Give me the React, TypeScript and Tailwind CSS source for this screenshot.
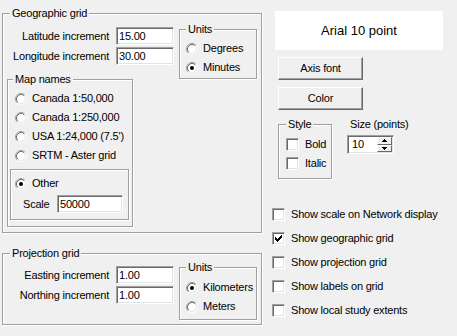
import type { ReactNode } from "react";

function GroupBox({
  title,
  titleClass = "left-[7px]",
  className = "",
  children,
}: {
  title?: string;
  titleClass?: string;
  className?: string;
  children: ReactNode;
}) {
  return (
    <div
      className={`relative border border-[#a0a0a0] shadow-[1px_1px_0_#fff,inset_1px_1px_0_#fff] ${className}`}
    >
      {title && (
        <span
          className={`absolute -top-[7px] bg-[#f0f0f0] px-[2px] leading-[13px] ${titleClass}`}
        >
          {title}
        </span>
      )}
      {children}
    </div>
  );
}

function TextBox({ value, className = "" }: { value: string; className?: string }) {
  return (
    <input
      defaultValue={value}
      className={`h-[18px] border border-t-[#a0a0a0] border-l-[#a0a0a0] border-b-white border-r-white bg-white px-[2px] leading-[13px] shadow-[inset_1px_1px_0_#696969,inset_-1px_-1px_0_#e3e3e3] outline-none ${className}`}
    />
  );
}

function RadioDot({ checked }: { checked?: boolean }) {
  return (
    <svg width="12" height="12" viewBox="0 0 12 12" className="shrink-0">
      <circle cx="6" cy="6" r="4.5" fill="#fff" />
      <path d="M2.11 9.89A5.5 5.5 0 0 1 9.89 2.11" fill="none" stroke="#a0a0a0" />
      <path d="M9.89 2.11A5.5 5.5 0 0 1 2.11 9.89" fill="none" stroke="#fff" />
      <path d="M2.82 9.18A4.5 4.5 0 0 1 9.18 2.82" fill="none" stroke="#696969" />
      <path d="M9.18 2.82A4.5 4.5 0 0 1 2.82 9.18" fill="none" stroke="#e3e3e3" />
      {checked && <circle cx="6" cy="6" r="2" fill="#000" />}
    </svg>
  );
}

function Radio({ label, checked }: { label: string; checked?: boolean }) {
  return (
    <div className="flex h-[19px] items-center gap-[5px]">
      <RadioDot checked={checked} />
      <span className="whitespace-nowrap">{label}</span>
    </div>
  );
}

function CheckBox({ checked }: { checked?: boolean }) {
  return (
    <span className="flex h-[13px] w-[13px] shrink-0 items-center justify-center border border-t-[#a0a0a0] border-l-[#a0a0a0] border-b-white border-r-white bg-white shadow-[inset_1px_1px_0_#696969,inset_-1px_-1px_0_#e3e3e3]">
      {checked && (
        <svg width="7" height="7" viewBox="0 0 7 7" shapeRendering="crispEdges">
          <path
            d="M6 0h1v3h-1zM5 1h1v3h-1zM4 2h1v3h-1zM3 3h1v3h-1zM2 4h1v3h-1zM1 3h1v3h-1zM0 2h1v3h-1z"
            fill="#000"
          />
        </svg>
      )}
    </span>
  );
}

function Check({ label, checked, className = "" }: { label: string; checked?: boolean; className?: string }) {
  return (
    <div className={`flex items-center gap-[6px] ${className}`}>
      <CheckBox checked={checked} />
      <span className="whitespace-nowrap">{label}</span>
    </div>
  );
}

function Button({ label, className = "" }: { label: string; className?: string }) {
  return (
    <button
      type="button"
      className={`flex h-[23px] w-[85px] items-center justify-center border border-t-white border-l-white border-b-[#696969] border-r-[#696969] bg-[#f0f0f0] font-normal text-black shadow-[inset_-1px_-1px_0_#a0a0a0] ${className}`}
    >
      {label}
    </button>
  );
}

function SpinHalf({ up }: { up?: boolean }) {
  return (
    <span className="flex flex-1 items-center justify-center border border-t-white border-l-white border-b-[#696969] border-r-[#696969] bg-[#f0f0f0]">
      <svg width="5" height="3" viewBox="0 0 5 3" shapeRendering="crispEdges">
        <path d={up ? "M2 0h1v1h-1zM1 1h3v1h-3zM0 2h5v1h-5z" : "M0 0h5v1h-5zM1 1h3v1h-3zM2 2h1v1h-1z"} fill="#000" />
      </svg>
    </span>
  );
}

function IncrementRows({ rows }: { rows: [string, string][] }) {
  return (
    <div className="grid grid-cols-[106px_58px] items-center gap-x-[7px] gap-y-[2px]">
      {rows.map(([label, value]) => (
        <div key={label} className="contents">
          <span className="text-right whitespace-nowrap">{label}</span>
          <TextBox value={value} className="w-[58px]" />
        </div>
      ))}
    </div>
  );
}

export default function App() {
  return (
    <div className="flex h-[336px] w-[457px] bg-[#f0f0f0] pl-[2px] font-['Liberation_Sans',Arial,sans-serif] text-[11px] leading-[13px] tracking-[-0.2px] text-black">
      <div className="flex w-[260px] flex-col pt-[13px]">
        <GroupBox title="Geographic grid" className="h-[220px] w-[260px]">
          <div className="mt-[13px] flex items-start">
            <IncrementRows
              rows={[
                ["Latitude increment", "15.00"],
                ["Longitude increment", "30.00"],
              ]}
            />
            <GroupBox
              title="Units"
              titleClass="left-[6px]"
              className="ml-[5px] mt-[2px] h-[50px] w-[78px] pl-[6px] pt-[9px]"
            >
              <Radio label="Degrees" />
              <Radio checked label="Minutes" />
            </GroupBox>
          </div>
          <GroupBox
            title="Map names"
            titleClass="left-[5px]"
            className="ml-[4px] h-[148px] w-[126px] pl-[2px] pt-[9px]"
          >
            <div className="pl-[5px]">
              <Radio label="Canada 1:50,000" />
              <Radio label="Canada 1:250,000" />
              <Radio label="USA 1:24,000 (7.5')" />
              <Radio label="SRTM - Aster grid" />
            </div>
            <GroupBox className="mt-[4px] h-[51px] w-[119px] pl-[4px] pt-[4px]">
              <Radio checked label="Other" />
              <div className="mt-[2px] flex items-center pl-[8px]">
                <span className="w-[34px]">Scale</span>
                <TextBox value="50000" className="w-[66px]" />
              </div>
            </GroupBox>
          </GroupBox>
        </GroupBox>

        <GroupBox title="Projection grid" className="mt-[20px] h-[72px] w-[260px]">
          <div className="mt-[12px] flex items-start">
            <IncrementRows
              rows={[
                ["Easting increment", "1.00"],
                ["Northing increment", "1.00"],
              ]}
            />
            <GroupBox
              title="Units"
              titleClass="left-[6px]"
              className="ml-[5px] mt-[1px] h-[53px] w-[78px] pl-[6px] pt-[10px]"
            >
              <Radio checked label="Kilometers" />
              <Radio label="Meters" />
            </GroupBox>
          </div>
        </GroupBox>
      </div>

      <div className="ml-[10px] flex flex-col">
        <div className="ml-[3px] mt-[11px] flex h-[39px] w-[168px] items-center justify-center bg-white text-[13px] tracking-normal">
          Arial 10 point
        </div>
        <Button label="Axis font" className="ml-[6px] mt-[7px]" />
        <Button label="Color" className="ml-[6px] mt-[7px]" />
        <div className="ml-[6px] mt-[8px] flex items-start">
          <GroupBox title="Style" className="mt-[6px] h-[55px] w-[54px] pl-[7px] pt-[10px]">
            <Check label="Bold" className="h-[19px] gap-[5px]" />
            <Check label="Italic" className="h-[19px] gap-[5px]" />
          </GroupBox>
          <div className="ml-[15px] flex flex-col">
            <span className="ml-[3px] whitespace-nowrap">Size (points)</span>
            <div className="mt-[4px] flex h-[19px] w-[47px] border border-t-[#a0a0a0] border-l-[#a0a0a0] border-b-white border-r-white bg-white shadow-[inset_1px_1px_0_#696969,inset_-1px_-1px_0_#e3e3e3]">
              <span className="flex items-center pl-[4px]">10</span>
              <div className="my-[1px] mr-[1px] ml-auto flex w-[15px] flex-col">
                <SpinHalf up />
                <SpinHalf />
              </div>
            </div>
          </div>
        </div>
        <div className="mt-[23px] flex flex-col">
          <Check label="Show scale on Network display" className="h-[24px]" />
          <Check checked label="Show geographic grid" className="h-[24px]" />
          <Check label="Show projection grid" className="h-[24px]" />
          <Check label="Show labels on grid" className="h-[24px]" />
          <Check label="Show local study extents" className="h-[24px]" />
        </div>
      </div>
    </div>
  );
}
